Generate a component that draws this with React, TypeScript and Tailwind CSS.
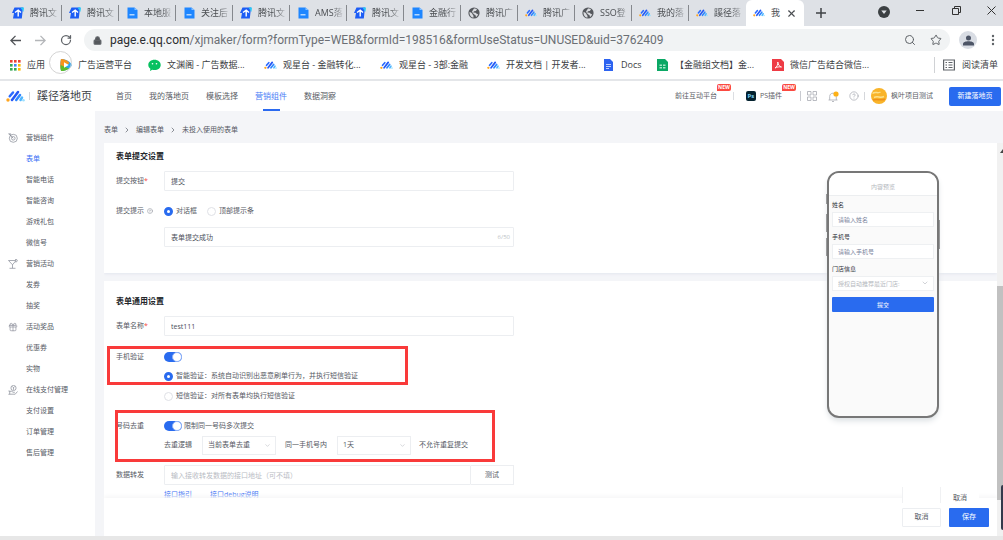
import type { ReactNode } from "react";
import { ChevronDown, ChevronRight, CircleHelp, Gift, Lock, RotateCw, Search, Star, X } from "lucide-react";

function Logo({ className }: { className: string }) {
  return (
    <svg viewBox="0 0 38 24" className={className} fill="none" strokeLinecap="round" strokeWidth="5">
      <circle cx="4" cy="20" r="3.4" fill="#ffa51f" />
      <path d="M7.500 12.500L14 5" stroke="#2b6bff" />
      <path d="M12 20L24 4" stroke="#2457f5" />
      <path d="M20.500 20L28 10" stroke="#2f86ff" />
      <path d="M29 20L32 15" stroke="#4fb6ff" />
      <circle cx="35" cy="20.500" r="2.500" fill="#9be0ff" />
    </svg>
  );
}

function TencentIcon() {
  return (
    <svg viewBox="0 0 12 12" className="size-3">
      <path d="M2.500.5H11L9.800 11.500H1L2 6H0z" fill="#1d5df5" />
      <path d="M8.500.5H12l-.6 4.500z" fill="#27c8f5" />
      <path d="M6.200 3v6.500M3 5.500l3.200-2.300L9 5.500" stroke="#fff" strokeWidth="1.400" fill="none" />
    </svg>
  );
}

function SheetIcon() {
  return (
    <svg viewBox="0 0 12 12" className="size-3">
      <path d="M1.500.5h7L11.500 3v8.500h-10z" fill="#1e86ff" />
      <path d="M8.500.5L11.500 3H8.500z" fill="#8cc4ff" />
      <path d="M3.500 7.800h5" stroke="#d9ecff" strokeWidth="1.200" />
    </svg>
  );
}

function GlobeIcon() {
  return (
    <svg viewBox="0 0 12 12" className="size-3">
      <circle cx="6" cy="6" r="5.600" fill="#55585d" />
      <path
        d="M1.500 5c1.200.2 2 .8 2.600 1.500.7.600.3 1.500 1.300 1.900l.2 2.100C3.200 10.500 1.300 8.500 1.500 5zM6 1.500c1.400 0 2.300.4 3 1L7.800 4 6 4.200 5.200 5.500l2.500.3 1.500 1.400 1-.4C10 8.300 9 9.500 8 10c-.3-1.200-.2-1.800-1.400-2.200L5 6.200 4 4.500z"
        fill="#d9dbdf"
      />
    </svg>
  );
}

const tabs: { icon: ReactNode; title: string }[] = [
  { icon: <TencentIcon />, title: "腾讯文" },
  { icon: <TencentIcon />, title: "腾讯文" },
  { icon: <SheetIcon />, title: "本地服" },
  { icon: <SheetIcon />, title: "关注后" },
  { icon: <TencentIcon />, title: "腾讯文" },
  { icon: <SheetIcon />, title: "AMS落" },
  { icon: <TencentIcon />, title: "腾讯文" },
  { icon: <SheetIcon />, title: "金融行" },
  { icon: <GlobeIcon />, title: "腾讯广" },
  { icon: <Logo className="w-3" />, title: "腾讯广" },
  { icon: <GlobeIcon />, title: "SSO登" },
  { icon: <Logo className="w-3" />, title: "我的落" },
  { icon: <Logo className="w-3" />, title: "蹊径落" },
];

function TabStrip() {
  return (
    <div className="flex h-[26px] items-stretch bg-[#dee1e6] pl-[5px] text-[9px] text-[#4b4e52]">
      {tabs.map((t, i) => (
        <button key={i} className="flex w-[57px] items-center py-[5px] pl-[7px]">
          <span className="mr-[6px] shrink-0">{t.icon}</span>
          <span className="flex-1 text-left whitespace-nowrap [mask-image:linear-gradient(to_right,black_55%,transparent_95%)]">
            {t.title}
          </span>
          <span className={i < 12 ? "h-4 w-px bg-[#85888d]" : "h-4 w-px"} />
        </button>
      ))}
      <div className="flex w-[58px] items-center gap-[6px] rounded-t-md bg-white pl-[7px]">
        <Logo className="w-3 shrink-0" />
        <span>我</span>
        <button aria-label="关闭标签页">
          <X size={11} strokeWidth={2.500} />
        </button>
      </div>
      <button aria-label="新标签页" className="ml-3">
        <svg viewBox="0 0 10 10" className="size-[10px]" stroke="#3f4246" strokeWidth="1.500">
          <path d="M5 0v10M0 5h10" />
        </svg>
      </button>
      <div className="ml-auto flex items-center gap-[26px] pr-[7px] pb-[6px] text-[#333]">
        <svg viewBox="0 0 12 12" className="mt-[3px] size-3">
          <circle cx="6" cy="6" r="6" fill="#3c4043" />
          <path d="M3.300 4.500h5.400L6 8z" fill="#dee1e6" />
        </svg>
        <button aria-label="最小化" className="h-px w-2 bg-[#333]" />
        <button aria-label="还原">
          <svg viewBox="0 0 9 9" className="ml-[2px] size-[9px]" fill="none" stroke="currentColor">
            <path d="M.5 2.500h6v6h-6zM2.500 2.500v-2h6v6h-2" />
          </svg>
        </button>
        <button aria-label="关闭">
          <svg viewBox="0 0 9 9" className="size-[9px]" stroke="currentColor">
            <path d="M.5.5l8 8M8.500.5l-8 8" />
          </svg>
        </button>
      </div>
    </div>
  );
}

function AddressBar() {
  return (
    <div className="flex h-7 items-center pr-2 pl-[10px] text-[#5f6368]">
      <button aria-label="后退" className="w-[25px]">
        <svg viewBox="0 0 10 10" className="size-[11px]" fill="none" stroke="#4f5256" strokeWidth="1.200">
          <path d="M10 5H1M5 .8L.8 5 5 9.200" />
        </svg>
      </button>
      <button aria-label="前进" className="w-[25px]">
        <svg viewBox="0 0 10 10" className="size-[11px]" fill="none" stroke="#b4b6b9" strokeWidth="1.200">
          <path d="M0 5h9M5 .8L9.200 5 5 9.200" />
        </svg>
      </button>
      <button aria-label="重新加载" className="w-6">
        <RotateCw size={12} strokeWidth={2.500} />
      </button>
      <div className="flex h-[22px] flex-1 items-center rounded-full bg-[#f1f3f4] pr-2 pl-[9px]">
        <Lock size={9} strokeWidth={3} fill="#55585c" className="shrink-0" />
        <span className="ml-2 flex-1 font-['Roboto',sans-serif] text-[12px] leading-4 whitespace-nowrap text-[#6b6f74]">
          <span className="text-[#2b2d30]">page.e.qq.com</span>
          /xjmaker/form?formType=WEB&amp;formId=198516&amp;formUseStatus=UNUSED&amp;uid=3762409
        </span>
        <button aria-label="缩放" className="mr-[14px]">
          <Search size={12} />
        </button>
        <button aria-label="收藏">
          <Star size={12} />
        </button>
      </div>
      <button aria-label="用户" className="ml-[9px] flex size-[18px] items-center justify-center rounded-full bg-[#d9dde4]">
        <svg viewBox="0 0 10 10" className="size-[11px]" fill="#4d5566">
          <circle cx="5" cy="2.800" r="2.300" />
          <path d="M0 9.500V8c0-1.500 2.500-2.300 5-2.300S10 6.500 10 8v1.500z" />
        </svg>
      </button>
      <button aria-label="菜单" className="ml-[14px]">
        <svg viewBox="0 0 4 12" className="h-3 w-1" fill="#5f6368">
          <circle cx="2" cy="2" r="1.200" />
          <circle cx="2" cy="6" r="1.200" />
          <circle cx="2" cy="10" r="1.200" />
        </svg>
      </button>
    </div>
  );
}

const dots = ["#ea4335", "#ea4335", "#ea4335", "#34a853", "#4285f4", "#fbbc05", "#34a853", "#34a853", "#fbbc05"];

const bookmarks: { width: string; title: string; icon: ReactNode }[] = [
  {
    width: "w-[50px]",
    title: "应用",
    icon: (
      <svg viewBox="0 0 11 11" className="size-[11px]">
        {dots.map((c, i) => (
          <rect key={i} x={(i % 3) * 4} y={Math.floor(i / 3) * 4} width="2.600" height="2.600" fill={c} />
        ))}
      </svg>
    ),
  },
  {
    width: "w-[88px]",
    title: "广告运营平台",
    icon: (
      <svg viewBox="0 0 12 12" className="size-3">
        <path d="M1 0c5 0 9 2.500 11 6-2 3.500-6 6-11 6-1-4-1-8 0-12z" fill="#2aa5f0" />
        <path d="M1 0c4 0 7 2 8.500 4L1 11C0 8 0 4 1 0z" fill="#f7941d" />
        <path d="M.6 6L9 9.500C6.500 11.500 4 12 1 12 .6 10 .5 8 .6 6z" fill="#5ebd2c" />
        <path d="M4 3.200L8.700 6 4 8.800z" fill="#fff" />
      </svg>
    ),
  },
  {
    width: "w-[116px]",
    title: "文渊阁 - 广告数据...",
    icon: (
      <svg viewBox="0 0 13 13" className="size-[13px]">
        <path d="M6.500.8C10 .8 12.700 3 12.700 6S10 11 6.500 11c-.8 0-1.500-.1-2.200-.3L2 12l.4-2.200C1.200 9 .3 7.700.3 6 .3 3 3 .8 6.500.8z" fill="#07c160" />
        <circle cx="4.500" cy="4.800" r=".8" fill="#fff" />
        <circle cx="8.500" cy="4.800" r=".8" fill="#fff" />
      </svg>
    ),
  },
  { width: "w-[116px]", title: "观星台 - 金融转化...", icon: <Logo className="w-[13px]" /> },
  { width: "w-[107px]", title: "观星台 - 3部:金融", icon: <Logo className="w-[13px]" /> },
  { width: "w-[116px]", title: "开发文档 | 开发者...", icon: <Logo className="w-[13px]" /> },
  {
    width: "w-[54px]",
    title: "Docs",
    icon: (
      <svg viewBox="0 0 10 12" className="mr-[2px] h-3 w-[10px]">
        <path d="M1 0h6l3 3v9H1z" fill="#2d63f0" />
        <path d="M3 5.500h5M3 7.500h5M3 9.500h3" stroke="#cfdcff" strokeWidth=".9" />
      </svg>
    ),
  },
  {
    width: "w-[115px]",
    title: "【金融组文档】金...",
    icon: (
      <svg viewBox="0 0 12 12" className="size-3">
        <path d="M0 0h8l3 3v9H0z" fill="#0ba865" />
        <path d="M2.500 5.500h2.500v1.500H2.500zM6 5.500h2.500v1.500H6zM2.500 8h2.500v1.500H2.500zM6 8h2.500v1.500H6z" fill="#a4e6c8" />
      </svg>
    ),
  },
  {
    width: "w-[115px]",
    title: "微信广告结合微信...",
    icon: (
      <svg viewBox="0 0 12 12" className="size-3">
        <path d="M0 0h9l3 3v9H0z" fill="#ee3b45" />
        <path d="M3 9c2-1 3-3.500 2.800-6C6.300 6 7.300 7.500 9.500 8 7 7.600 5 8 3 9z" stroke="#fff" fill="none" strokeWidth=".9" />
      </svg>
    ),
  },
];

function BookmarkBar() {
  return (
    <nav className="relative flex h-[25px] items-center pr-[5px] pb-[3px] pl-[10px] text-[9px] leading-4 whitespace-nowrap text-[#3c4043]">
      {bookmarks.map((b) => (
        <a key={b.title} href="#" className={`flex shrink-0 items-center gap-[6px] ${b.width}`}>
          <span className="shrink-0">{b.icon}</span>
          {b.title}
        </a>
      ))}
      <span className="absolute -top-[3px] left-[49px] size-[23px] rounded-full border border-[#d4d4d4]" />
      <button className="ml-auto flex items-center gap-[7px] border-l border-[#d0d2d5] pl-2">
        <svg viewBox="0 0 12 12" className="size-3" fill="none" stroke="#5f6368" strokeWidth="1.200">
          <path d="M.6 1h10.800v10H.6zM2.500 3.500H4M2.500 6H4M2.500 8.500H4M5.500 3.500h4M5.500 6h4M5.500 8.500h4" />
        </svg>
        阅读清单
      </button>
    </nav>
  );
}

function NewBadge() {
  return (
    <span className="absolute -top-[7px] left-full flex h-[7px] w-[14px] items-center justify-center rounded-t-xs rounded-br-xs bg-[#fb4a41] text-[5px] leading-none font-bold text-white">
      NEW
    </span>
  );
}

function AppHeader() {
  return (
    <header className="flex h-8 items-center border-t-2 border-[#e4e6e9] bg-white pr-[2px] pl-[6px] text-[7px] text-[#5a5d65]">
      <Logo className="w-[19px]" />
      <span className="ml-1 h-2 w-px bg-[#d5d7db]" />
      <h1 className="ml-[7px] text-[11px] text-[#3c3f46]">蹊径落地页</h1>
      <nav className="ml-6 flex h-full items-stretch gap-[17px] text-[8px] leading-[30px]">
        <a href="#">首页</a>
        <a href="#">我的落地页</a>
        <a href="#">模板选择</a>
        <a href="#" className="relative text-[#4a7df6]">
          营销组件
          <span className="absolute bottom-0 left-2 h-[2px] w-[17px] bg-[#2b6af0]" />
        </a>
        <a href="#">数据洞察</a>
      </nav>
      <div className="ml-auto flex items-center">
        <a href="#" className="relative">
          前往互动平台
          <NewBadge />
        </a>
        <span className="ml-4 h-2 w-px bg-[#dcdee2]" />
        <a href="#" className="relative ml-3 flex items-center gap-1">
          <span className="flex size-[10px] items-center justify-center rounded-[2px] bg-[#04222f] text-[6px] leading-none font-bold text-[#7fd3f5]">
            Ps
          </span>
          PS插件
          <NewBadge />
        </a>
        <span className="ml-[18px] h-[10px] w-px bg-[#c9cbd1]" />
        <button aria-label="应用中心" className="ml-[6px]">
          <svg viewBox="0 0 10 10" className="size-[10px]" fill="none" stroke="#a8abb3" strokeWidth=".8">
            <path d="M.5.5h3.500v3.500H.5zM6 .5h3.500v3.500H6zM.5 6h3.500v3.500H.5zM6 6h3.500v3.500H6z" />
          </svg>
        </button>
        <button aria-label="通知" className="ml-[11px]">
          <svg viewBox="0 0 11 11" className="size-[11px]" fill="none" stroke="#a8abb3" strokeWidth=".8">
            <path d="M.5 9h9M1.700 9V5.500C1.700 3.500 3 2.200 5 2.200S8.300 3.500 8.300 5.500V9M4 10.500h2" />
            <circle cx="8" cy="3" r="2.600" fill="#fdb116" stroke="none" />
          </svg>
        </button>
        <button aria-label="帮助" className="ml-[10px]">
          <CircleHelp size={10} strokeWidth={1.500} className="text-[#9a9da6]" />
        </button>
        <span className="ml-[5px] h-2 w-px bg-[#d5d7db]" />
        <svg viewBox="0 0 16 16" className="ml-[6px] size-4">
          <circle cx="8" cy="8" r="8" fill="#f9b42a" />
          <path d="M1.500 5.500c3-2.500 5 .5 8-1.500M3 9.500c4-2 6 1 10-1" stroke="#fde08a" strokeWidth="1.500" fill="none" />
          <path d="M2 12c4-2 8 1.500 12-1" stroke="#f0911a" strokeWidth="1.500" fill="none" />
        </svg>
        <span className="ml-1 text-[7px]">枫叶项目测试</span>
        <button className="ml-4 h-[19px] w-[52px] rounded-[2px] bg-[#296bef] text-white">新建落地页</button>
      </div>
    </header>
  );
}

const menu = [
  {
    title: "营销组件",
    icon: (
      <svg viewBox="0 0 10 10" className="size-[10px]" fill="none" stroke="#858995" strokeWidth=".7">
        <circle cx="5.300" cy="5.300" r="4" />
        <circle cx="5.300" cy="5.300" r="1.800" />
        <path d="M.3.8h2.400v2.400M5.300 5.300L1 1" />
      </svg>
    ),
    items: ["表单", "智能电话", "智能咨询", "游戏礼包", "微信号"],
  },
  {
    title: "营销活动",
    icon: (
      <svg viewBox="0 0 10 10" className="size-[10px]" fill="none" stroke="#858995" strokeWidth=".7">
        <path d="M.5 1.500h7.500L4.500 5.800zM4.500 5.800v3.400M1.500 9.300h6M7 2.500A1.300 1.300 0 1 0 7 .8" />
      </svg>
    ),
    items: ["发券", "抽奖"],
  },
  {
    title: "活动奖品",
    icon: <Gift size={10} strokeWidth={1.500} className="text-[#858995]" />,
    items: ["优惠券", "实物"],
  },
  {
    title: "在线支付管理",
    icon: (
      <svg viewBox="0 0 10 10" className="size-[10px]" fill="none" stroke="#858995" strokeWidth=".7">
        <circle cx="5.500" cy="3" r="2.600" />
        <path d="M4.500 1.500l1 1.300 1-1.300M5.500 2.800v2M.4 6h1.300v3.300H.4M1.700 6.300h2l1.500 1h1.600M1.700 9.200h5.500l2.300-2.700" />
      </svg>
    ),
    items: ["支付设置", "订单管理", "售后管理"],
  },
];

function Sidebar() {
  return (
    <aside className="w-[95px] shrink-0 bg-white pt-4 pl-2 text-[7px] leading-[21px] text-[#565a64]">
      {menu.map((group) => (
        <section key={group.title}>
          <h2 className="flex h-[21px] items-center gap-2">
            {group.icon}
            {group.title}
          </h2>
          <ul>
            {group.items.map((item) => (
              <li key={item} className="h-[21px] pl-[18px]">
                <a href="#" className={item === "表单" ? "text-[#3a70f5]" : ""}>
                  {item}
                </a>
              </li>
            ))}
          </ul>
        </section>
      ))}
    </aside>
  );
}

const radioStyle =
  "size-[9px] appearance-none rounded-full border border-[#dfe1e6] bg-white checked:border-3 checked:border-[#296bef]";
const inputStyle =
  "h-5 w-full min-w-0 rounded-[1px] border border-[#eceef1] bg-white px-[6px] text-[#4b4f5a] placeholder:text-[#b9bcc4]";

function Field({ label, htmlFor, extra, children }: { label: string; htmlFor: string; extra?: ReactNode; children: ReactNode }) {
  return (
    <div className="flex items-center">
      <label htmlFor={htmlFor} className="flex w-12 shrink-0 items-center">
        {label}
        {extra}
      </label>
      {children}
    </div>
  );
}

function Radio({ name, label, checked }: { name: string; label: string; checked?: boolean }) {
  return (
    <label className="flex h-4 items-center gap-[3px]">
      <input type="radio" name={name} defaultChecked={checked} className={radioStyle} />
      {label}
    </label>
  );
}

function Switch({ id }: { id: string }) {
  return (
    <span className="relative flex h-4 w-[18px] items-center">
      <input id={id} type="checkbox" role="switch" defaultChecked className="h-[10px] w-[18px] appearance-none rounded-full bg-[#296bef]" />
      <span className="pointer-events-none absolute right-0 size-[10px] rounded-full border border-[#8fb2f8] bg-white" />
    </span>
  );
}

function Select({ label, value }: { label: string; value: string }) {
  return (
    <span className="relative flex w-[74px] items-center">
      <select aria-label={label} className="h-[19px] w-full appearance-none border border-[#eceef1] bg-white px-[5px] text-[7px]">
        <option>{value}</option>
      </select>
      <ChevronDown size={7} strokeWidth={1.500} className="pointer-events-none absolute right-[5px] text-[#a5a8b0]" />
    </span>
  );
}

function SubmitCard() {
  return (
    <section className="bg-white px-3 pt-[5px] pb-[26px] shadow-sm shadow-[#e6e8f0]">
      <h2 className="text-[8px] leading-4 font-bold text-[#24262b]">表单提交设置</h2>
      <div className="mt-[7px] max-w-[398px]">
        <Field label="提交按钮" htmlFor="submit" extra={<span className="text-[#f5483b]">*</span>}>
          <input id="submit" defaultValue="提交" className={inputStyle} />
        </Field>
        <div className="mt-3">
          <Field label="提交提示" htmlFor="tip" extra={<CircleHelp size={6} strokeWidth={2} className="ml-[3px] text-[#8b8f99]" />}>
            <div className="flex gap-[10px]">
              <Radio name="tipType" label="对话框" checked />
              <Radio name="tipType" label="顶部提示条" />
            </div>
          </Field>
        </div>
        <div className="relative mt-2 flex items-center pl-12">
          <input id="tip" defaultValue="表单提交成功" className={inputStyle} />
          <span className="absolute right-1 text-[6px] text-[#bcbfc6]">6/50</span>
        </div>
      </div>
    </section>
  );
}

function GeneralCard() {
  return (
    <section className="relative mt-2 bg-white px-3 pt-3 pb-8">
      <h2 className="text-[8px] leading-4 font-bold text-[#24262b]">表单通用设置</h2>
      <div className="mt-[7px] max-w-[398px]">
        <Field label="表单名称" htmlFor="name" extra={<span className="text-[#f5483b]">*</span>}>
          <input id="name" defaultValue="test111" className={inputStyle} />
        </Field>
        <div className="mt-[13px]">
          <Field label="手机验证" htmlFor="verify">
            <Switch id="verify" />
          </Field>
        </div>
        <div className="mt-[3px] space-y-1 pl-12">
          <Radio name="verifyType" label="智能验证：系统自动识别出恶意刷单行为，并执行短信验证" checked />
          <Radio name="verifyType" label="短信验证：对所有表单均执行短信验证" />
        </div>
        <div className="mt-[14px]">
          <Field label="号码去重" htmlFor="dedupe">
            <Switch id="dedupe" />
            <span className="ml-[2px]">限制同一号码多次提交</span>
          </Field>
        </div>
        <div className="mt-[2px] flex items-center pl-12 whitespace-nowrap">
          <span className="w-[38px]">去重逻辑</span>
          <Select label="去重逻辑" value="当前表单去重" />
          <span className="w-[61px] pl-[9px]">同一手机号内</span>
          <Select label="时间范围" value="1天" />
          <span className="ml-2">不允许重复提交</span>
        </div>
        <div className="mt-[10px]">
          <Field label="数据转发" htmlFor="forward">
            <input id="forward" placeholder="输入接收转发数据的接口地址（可不填）" className={inputStyle} />
            <button className="h-5 w-[43px] shrink-0 border border-l-0 border-[#eceef1]">测试</button>
          </Field>
        </div>
        <div className="mt-[2px] flex gap-[18px] pl-12 leading-4 text-[#3a70f5]">
          <a href="#">接口指引</a>
          <a href="#">接口debug说明</a>
        </div>
      </div>
      {/* highlight frames */}
      <div className="pointer-events-none absolute top-[65px] left-[3px] h-[39px] w-[301px] border-3 border-[#f93a3a]" />
      <div className="pointer-events-none absolute top-[129px] left-[11px] h-[52px] w-[380px] border-3 border-[#f93a3a]" />
    </section>
  );
}

function PhonePreview() {
  const field = "mt-px h-[15px] w-full border border-[#eef0f2] bg-white px-[5px] text-[6px]";
  return (
    <div className="absolute top-7 right-[58px] w-[112px]">
      <span className="absolute top-[23px] -left-px h-[10px] w-[2px] bg-[#666]" />
      <span className="absolute top-[43px] -left-px h-[18px] w-[2px] bg-[#666]" />
      <span className="absolute top-[67px] -left-px h-[18px] w-[2px] bg-[#666]" />
      <span className="absolute top-[49px] -right-px h-[29px] w-[2px] bg-[#666]" />
      <div className="relative h-[247px] overflow-hidden rounded-[12px] border-2 border-[#777] bg-[#fafafa] text-[6px] leading-3 text-[#33363d] shadow-md shadow-[#dfe3e6]">
        <p className="border-b border-[#eceef0] bg-white pt-2 pb-[2px] text-center text-[#b6b9be]">内容预览</p>
        <div className="px-[3px] pt-[3px]">
          <label className="block">
            姓名
            <input placeholder="请输入姓名" className={`${field} placeholder:text-[#7c86a0]`} />
          </label>
          <label className="mt-1 block">
            手机号
            <input placeholder="请输入手机号" className={`${field} placeholder:text-[#7c86a0]`} />
          </label>
          <label className="relative mt-1 block">
            门店信息
            <select className={`${field} appearance-none text-[#b6b9be]`}>
              <option>授权自动推荐最近门店:</option>
            </select>
            <ChevronDown size={8} strokeWidth={1.500} className="absolute right-[5px] bottom-1 text-[#a5a8b0]" />
          </label>
          <button className="mt-[6px] h-[15px] w-full rounded-[1px] bg-[#296bef] text-white">提交</button>
        </div>
      </div>
    </div>
  );
}

function FooterBar() {
  return (
    <footer className="relative flex h-[38px] shrink-0 items-center justify-end gap-2 bg-white pr-2 shadow-[0_-2px_4px_#f6f6f7]">
      <span className="absolute right-[56px] bottom-[33px] h-4 w-[39px] border-x border-[#f0f1f3] bg-white" />
      <span className="absolute right-[18px] bottom-[30px] bg-white px-3 leading-4">取消</span>
      <button className="relative h-[19px] w-[39px] rounded-[1px] border border-[#eceef1] bg-white">取消</button>
      <button className="relative h-[19px] w-10 rounded-[1px] bg-[#296bef] text-white">保存</button>
    </footer>
  );
}

export default function App() {
  return (
    <div className="flex h-screen flex-col overflow-hidden border-b-4 border-[#e7e7e7] bg-white font-['Open_Sans','Noto_Sans_CJK_SC',sans-serif]">
      <TabStrip />
      <AddressBar />
      <BookmarkBar />
      <AppHeader />
      <div className="flex min-h-0 flex-1 bg-[#f4f5f8]">
        <Sidebar />
        <main className="flex min-w-0 flex-1 flex-col pl-[9px] text-[7px] text-[#565a64]">
          <nav className="flex h-8 shrink-0 items-center gap-[5px] pt-[6px]">
            <a href="#">表单</a>
            <ChevronRight size={8} />
            <a href="#">编辑表单</a>
            <ChevronRight size={8} />
            <span>未投入使用的表单</span>
          </nav>
          <div className="flex min-h-0 flex-1">
            <div className="flex min-w-0 flex-1 flex-col">
              <div className="relative min-h-0 flex-1 overflow-hidden">
                <SubmitCard />
                <GeneralCard />
                <PhonePreview />
              </div>
              <FooterBar />
            </div>
            <div className="relative flex w-[6px] flex-col bg-[#f1f1f1]">
              <svg viewBox="0 0 6 4" className="mt-[6px] h-1 w-[6px]" fill="#444">
                <path d="M3 4L6 0v4z" />
              </svg>
              <span className="mt-[133px] h-[214px] bg-[#c1c1c1]" />
              <span className="absolute right-0 bottom-[6px] h-[45px] w-[2px] rounded-l-full bg-[#343a4c]" />
            </div>
          </div>
        </main>
      </div>
    </div>
  );
}
